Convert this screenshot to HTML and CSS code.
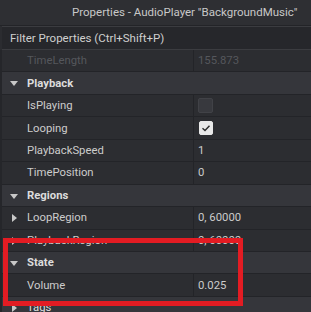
FILE: index.html
```html
<!DOCTYPE html>
<html lang="en">
<head>
    <meta charset="UTF-8">
    <title>Properties</title>
    <link rel="stylesheet" href="styles.css">
</head>
<body>
    <!-- title bar -->
    <div class="titlebar">Properties - AudioPlayer "BackgroundMusic"</div>

    <!-- filter box -->
    <div class="filter">Filter Properties (Ctrl+Shift+P)</div>

    <!-- property list -->
    <div class="props">
        <div class="row disabled"><span class="name">TimeLength</span><span class="value">155.873</span></div>

        <div class="section"><span class="arrow down"></span>Playback</div>
        <div class="row"><span class="name">IsPlaying</span><span class="value"><span class="check"></span></span></div>
        <div class="row"><span class="name">Looping</span><span class="value"><span class="check on">
            <svg width="10" height="10" viewBox="0 0 10 10"><path d="M1.5 5.2 L4 7.5 L8.5 2.8" fill="none" stroke="#2a2a2a" stroke-width="1.4"/></svg>
        </span></span></div>
        <div class="row"><span class="name">PlaybackSpeed</span><span class="value">1</span></div>
        <div class="row"><span class="name">TimePosition</span><span class="value">0</span></div>

        <div class="section"><span class="arrow down"></span>Regions</div>
        <div class="row"><span class="arrow right"></span><span class="name">LoopRegion</span><span class="value">0, 60000</span></div>
        <div class="row"><span class="arrow right"></span><span class="name">PlaybackRegion</span><span class="value">0, 60000</span></div>

        <div class="section"><span class="arrow down"></span>State</div>
        <div class="row"><span class="name">Volume</span><span class="value">0.025</span></div>

        <div class="section tags"><span class="arrow right"></span>Tags</div>
    </div>

    <!-- highlight -->
    <div class="highlight"></div>
</body>
</html>
```

FILE: styles.css
```css
body {
    margin: 0;
    background: #2b2c30;
    font-family: Roboto, "Liberation Sans", sans-serif;
    font-size: 11.3px;
    color: #cccccc;
    overflow: hidden;
}

.titlebar {
    height: 25px;
    line-height: 25px;
    padding-left: 72px;
    background: #2e2f33;
    color: #c8c8c8;
    font-size: 11.5px;
    white-space: nowrap;
    border-bottom: 1px solid #232428;
}

.filter {
    height: 22px;
    line-height: 22px;
    padding-left: 8px;
    margin: 0 0 0 2px;
    background: #26272b;
    border-top: 1px solid #3b3c40;
    border-bottom: 1px solid #3b3c40;
    color: #cfcfcf;
    font-size: 11.5px;
}

.props {
    padding-left: 2px;
    background: #25262a;
}

.row, .section {
    position: relative;
    height: 22.45px;
    box-sizing: border-box;
    display: flex;
    align-items: center;
    border-bottom: 1px solid #232428;
}

.row {
    background: #2c2d31;
}

.section {
    background: #35363b;
    padding-left: 25px;
    font-weight: bold;
    color: #dcdcdc;
}

.section.tags {
    font-weight: normal;
}

.name {
    width: 166px;
    padding-left: 25px;
    height: 100%;
    display: flex;
    align-items: center;
    border-right: 1px solid #232428;
}

.value {
    padding-left: 4px;
    display: flex;
    align-items: center;
}

.disabled .name, .disabled .value {
    color: #55575c;
}

.arrow {
    position: absolute;
    width: 0;
    height: 0;
}

.arrow.down {
    left: 8px;
    top: 9px;
    border-left: 4px solid transparent;
    border-right: 4px solid transparent;
    border-top: 5px solid #c8c8c8;
}

.arrow.right {
    left: 10px;
    top: 7px;
    border-top: 4px solid transparent;
    border-bottom: 4px solid transparent;
    border-left: 5px solid #c8c8c8;
}

.check {
    width: 15px;
    height: 15px;
    box-sizing: border-box;
    background: #38393e;
    border: 1px solid #414247;
    border-radius: 2px;
    display: flex;
    align-items: center;
    justify-content: center;
}

.check.on {
    width: 14px;
    height: 14px;
    margin-left: 1px;
    background: #e8e8e8;
    border-color: #e8e8e8;
}

.highlight {
    position: absolute;
    left: 3px;
    top: 238px;
    width: 240px;
    height: 68px;
    box-sizing: border-box;
    border: 5px solid #e31c23;
}
```
